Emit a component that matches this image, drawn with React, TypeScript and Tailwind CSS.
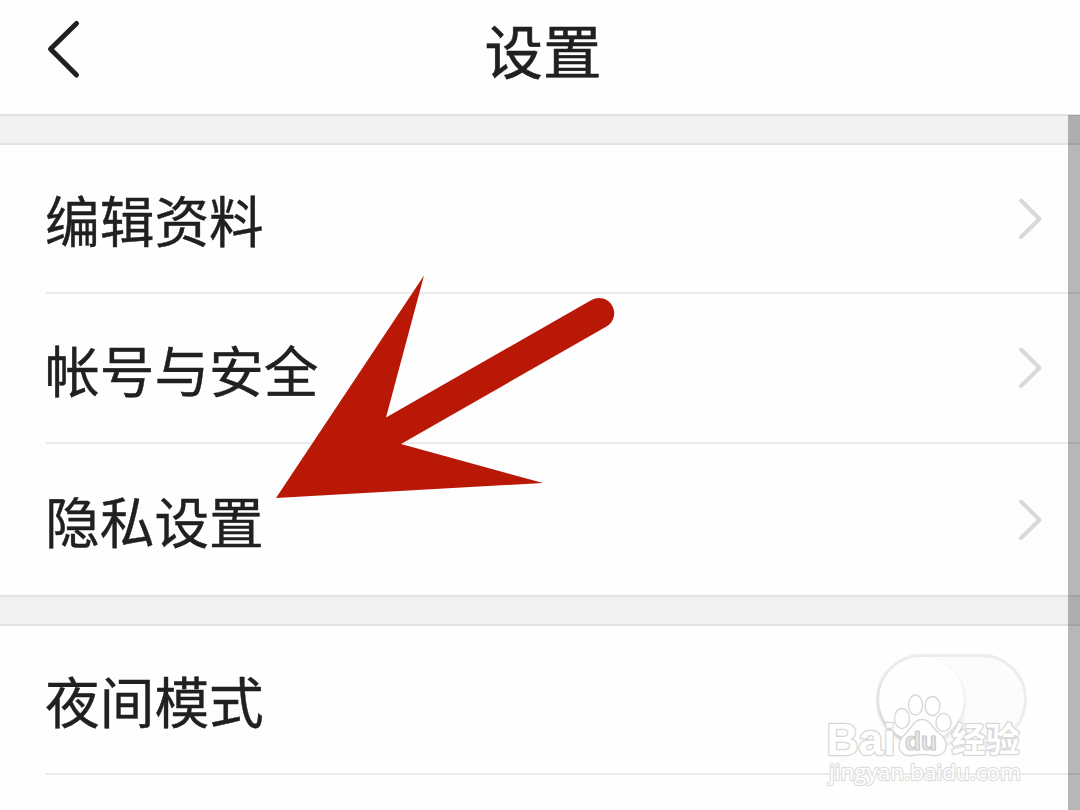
const ROWS = [
  { label: "编辑资料", height: "h-[147px]" },
  { label: "帐号与安全", height: "h-[148px]" },
  { label: "隐私设置", height: "h-[151px]" },
];

function Divider() {
  return <div className="ml-[46px] h-0.5 shrink-0 bg-[#ebebeb]" />;
}

function SectionGap() {
  return (
    <div className="h-[31px] shrink-0 border-y-2 border-[#e2e2e2] bg-[#f1f1f1]" />
  );
}

function Chevron() {
  return (
    <svg
      className="h-12 w-8"
      viewBox="0 0 32 48"
      fill="none"
      stroke="#d9d9d9"
      strokeWidth="4"
      strokeLinecap="round"
      strokeLinejoin="round"
    >
      <path d="M7 5.500l18.500 18.500L7 42" />
    </svg>
  );
}

function Arrow() {
  return (
    <svg
      className="pointer-events-none absolute left-[260px] top-[260px] h-[250px] w-[370px]"
      viewBox="260 260 370 250"
      fill="#ba1807"
    >
      <path d="M276 498L424 275.500L386 417.500L591.500 300A15 15 0 0 1 606.500 326.500L401 444L543 483Z" />
    </svg>
  );
}

function Watermark() {
  return (
    <svg
      className="pointer-events-none absolute left-[820px] top-[685px] h-[110px] w-[220px]"
      viewBox="820 685 220 110"
      fill="#ffffff"
      stroke="#d8d8d8"
      strokeWidth="1.400"
      strokeLinejoin="round"
    >
      <g
        fontFamily="'Liberation Sans', 'Noto Sans CJK SC', sans-serif"
        fontWeight="700"
        paintOrder="stroke"
        strokeWidth="2.600"
      >
        <text x="826.500" y="754.500" fontSize="45" textLength="69" lengthAdjust="spacingAndGlyphs">
          Bai
        </text>
        <text x="951.500" y="752" fontSize="34" textLength="68" lengthAdjust="spacingAndGlyphs">
          经验
        </text>
      </g>
      <ellipse cx="902" cy="718.500" rx="7.500" ry="10" />
      <ellipse cx="915.500" cy="705" rx="7" ry="10" />
      <ellipse cx="932.500" cy="706" rx="7.500" ry="9.500" />
      <ellipse cx="943.500" cy="722.500" rx="7.500" ry="9" />
      <path d="M922 719.500C930 719.500 932 727 937 731.500C943 736 947 740 946 747C945 754 939 756.500 933 755.500C925 754 919 754 912 755.500C905 756.500 899 753 899 745C899 738 905 735 909 730C913 725 915 719.500 922 719.500Z" />
      <text
        x="905"
        y="750"
        fontSize="26"
        fontFamily="'Liberation Sans', sans-serif"
        fontWeight="700"
        fill="#e8e8e8"
        stroke="#cacaca"
        strokeWidth="1.200"
        textLength="32"
        lengthAdjust="spacingAndGlyphs"
      >
        du
      </text>
      <text
        x="829"
        y="780"
        fontSize="22"
        fontFamily="'Open Sans', 'Noto Sans', sans-serif"
        fontWeight="500"
        paintOrder="stroke"
        stroke="#dedede"
        strokeWidth="2.400"
        textLength="192"
        lengthAdjust="spacingAndGlyphs"
      >
        jingyan.baidu.com
      </text>
    </svg>
  );
}

export default function App() {
  return (
    <main className="relative flex h-[810px] w-[1080px] flex-col overflow-hidden bg-[#fefefe] font-['Noto_Sans_CJK_SC',sans-serif] text-[54.7px] leading-none text-[#202020] [-webkit-text-stroke:0.4px_#202020]">
      <header className="grid h-[114px] shrink-0 grid-cols-3 items-center px-[42px] pb-[15px]">
        <svg
          className="h-16 w-11"
          viewBox="0 0 44 64"
          fill="none"
          stroke="#202020"
          strokeWidth="5"
          strokeLinecap="round"
          strokeLinejoin="round"
        >
          <path d="M34.500 5.500L8.500 31L34.500 57" />
        </svg>
        <h1 className="pl-1.5 text-center text-[58.5px] leading-none [-webkit-text-stroke:0.6px_#202020]">
          设置
        </h1>
      </header>

      <SectionGap />

      <section className="shrink-0">
        {ROWS.map(({ label, height }, i) => (
          <div key={label}>
            {i > 0 && <Divider />}
            <div
              className={`flex items-center justify-between pl-[45px] pr-[34px] ${height}`}
            >
              <span className="pt-0.5">{label}</span>
              <Chevron />
            </div>
          </div>
        ))}
      </section>

      <SectionGap />

      <section className="shrink-0">
        <div className="flex h-[147px] items-center justify-between pl-[45px] pr-[53px]">
          <span className="pt-0.5">夜间模式</span>
          <button
            className="h-[91px] w-[151px] rounded-full border-[3px] border-[#ededed] bg-[#fcfcfc]"
            role="switch"
            aria-checked="false"
          >
            <span className="block size-[85px] rounded-full bg-[#fefefe] shadow-[0_3px_5px_rgba(0,0,0,0.140)]" />
          </button>
        </div>
        <Divider />
      </section>

      <div className="absolute bottom-0 right-0 top-[115px] w-3 bg-black/28" />
      <Arrow />
      <Watermark />
    </main>
  );
}
